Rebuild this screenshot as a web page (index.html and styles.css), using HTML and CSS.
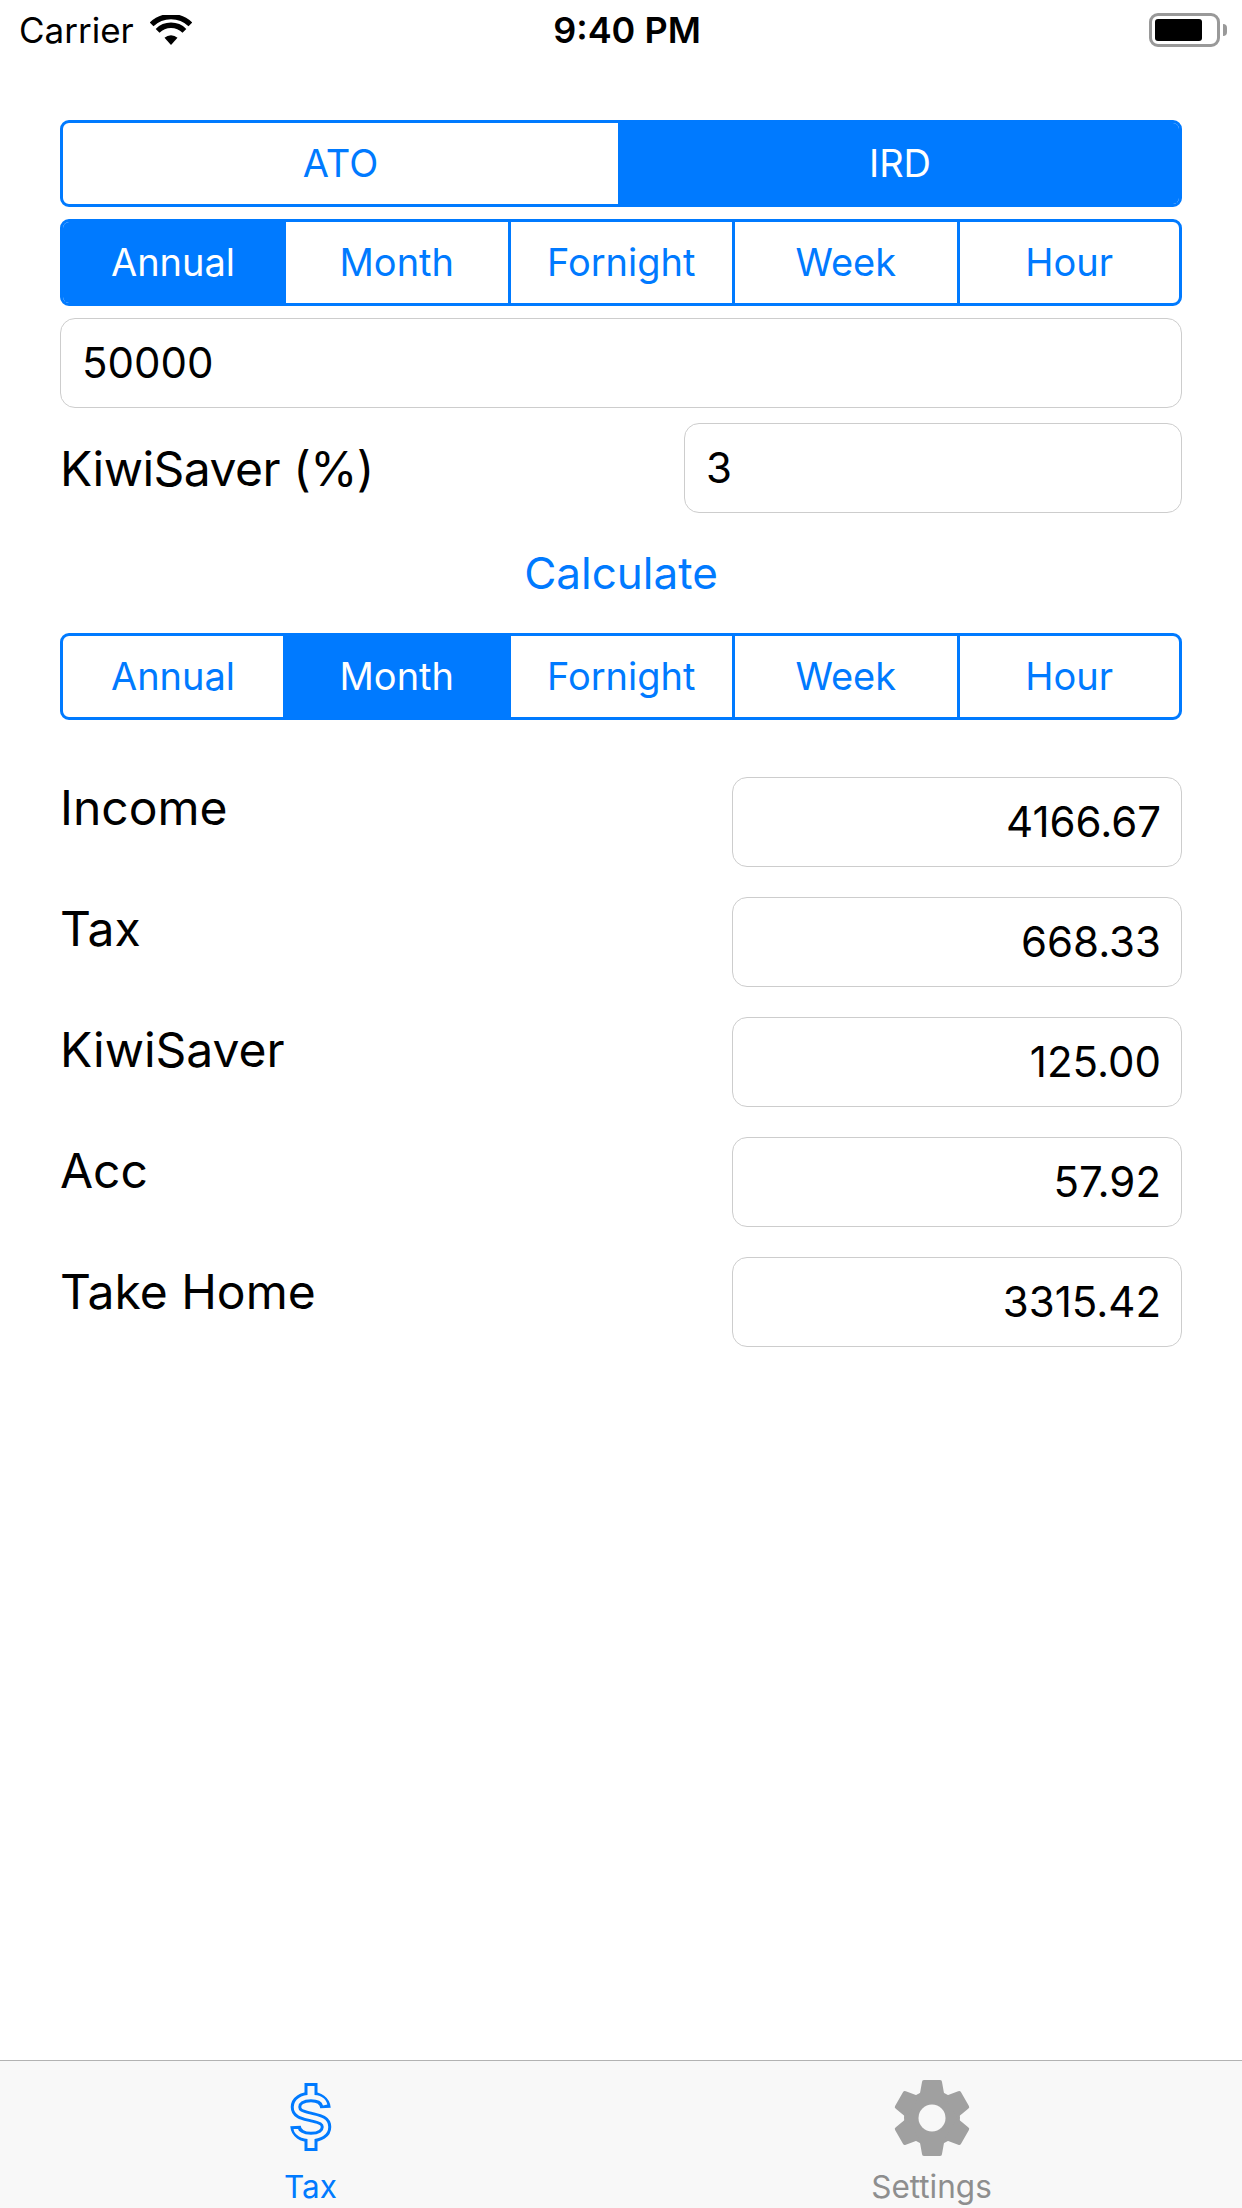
FILE: index.html
```html
<!DOCTYPE html>
<html lang="en">
<head>
    <meta charset="UTF-8">
    <meta name="viewport" content="width=device-width, initial-scale=1.0">
    <title>Tax</title>
    <link rel="stylesheet" href="styles.css">
</head>
<body>
    <div class="status-bar">
        <div class="status-left">
            <span class="carrier">Carrier</span>
            <svg class="wifi" width="42" height="30" viewBox="0 0 42 30">
                <path d="M21 30 L14.5 22.8 A9.6 9.6 0 0 1 27.5 22.8 Z" fill="#000"/>
                <path d="M7.6 15.8 A19 19 0 0 1 34.4 15.8" fill="none" stroke="#000" stroke-width="5.4"/>
                <path d="M1.6 9.4 A28 28 0 0 1 40.4 9.4" fill="none" stroke="#000" stroke-width="5.4"/>
            </svg>
        </div>
        <span class="clock">9:40 PM</span>
        <div class="status-right">
            <div class="battery"><div class="battery-level"></div></div>
            <div class="battery-cap"></div>
        </div>
    </div>

    <main class="content">
        <div class="segments seg-top">
            <div class="seg">ATO</div>
            <div class="seg active">IRD</div>
        </div>
        <div class="segments seg-period">
            <div class="seg active">Annual</div>
            <div class="seg">Month</div>
            <div class="seg">Fornight</div>
            <div class="seg">Week</div>
            <div class="seg">Hour</div>
        </div>
        <div class="field salary">50000</div>
        <div class="kiwi-row">
            <span class="row-label">KiwiSaver (%)</span>
            <div class="field kiwi-field">3</div>
        </div>
        <div class="calculate">Calculate</div>
        <div class="segments seg-result">
            <div class="seg">Annual</div>
            <div class="seg active">Month</div>
            <div class="seg">Fornight</div>
            <div class="seg">Week</div>
            <div class="seg">Hour</div>
        </div>
        <div class="results">
            <div class="result-labels">
                <span class="row-label">Income</span>
                <span class="row-label">Tax</span>
                <span class="row-label">KiwiSaver</span>
                <span class="row-label">Acc</span>
                <span class="row-label">Take Home</span>
            </div>
            <div class="result-values">
                <div class="field result-field">4166.67</div>
                <div class="field result-field">668.33</div>
                <div class="field result-field">125.00</div>
                <div class="field result-field">57.92</div>
                <div class="field result-field">3315.42</div>
            </div>
        </div>
    </main>

    <nav class="tab-bar">
        <div class="tab active">
            <svg class="tab-icon" width="44" height="78" viewBox="0 0 44 78">
                <g fill="none" stroke="#007aff">
                    <path stroke-width="13" d="M22 4 V18 M22 58 V72"/>
                    <path stroke-width="10.5" d="M36.5 29 C36 22 30 18 22 18 C13 18 7 22 7 28 C7 35 14 36 22 38 C30 40 37 41 37 48 C37 54 31 58 22 58 C13 58 7 54 6.5 47"/>
                </g>
                <g fill="none" stroke="#f8f8f8">
                    <path stroke-width="7" d="M22 7 V19 M22 57 V69"/>
                    <path stroke-width="4.5" d="M36.2 26 C35 21 30 18 22 18 C13 18 7 22 7 28 C7 35 14 36 22 38 C30 40 37 41 37 48 C37 54 31 58 22 58 C13 58 7 54 6.8 50"/>
                </g>
            </svg>
            <span class="tab-label">Tax</span>
        </div>
        <div class="tab">
            <svg class="tab-icon" width="76" height="78" viewBox="-38 -39 76 78">
                <defs>
                    <path id="tooth" d="M-10 -36 Q-10 -38 -8 -38 H8 Q10 -38 10 -36 L12.5 -22 H-12.5 Z"/>
                </defs>
                <g fill="#a0a0a0">
                    <circle r="28"/>
                    <use href="#tooth"/>
                    <use href="#tooth" transform="rotate(60)"/>
                    <use href="#tooth" transform="rotate(120)"/>
                    <use href="#tooth" transform="rotate(180)"/>
                    <use href="#tooth" transform="rotate(240)"/>
                    <use href="#tooth" transform="rotate(300)"/>
                </g>
                <circle r="13.5" fill="#f8f8f8"/>
            </svg>
            <span class="tab-label">Settings</span>
        </div>
    </nav>
</body>
</html>
```

FILE: styles.css
```css
* {
    box-sizing: border-box;
}
body {
    margin: 0;
    width: 1242px;
    height: 2208px;
    display: flex;
    flex-direction: column;
    overflow: hidden;
    background: #fff;
    color: #000;
    font-family: Inter, "Liberation Sans", sans-serif;
}
.status-bar {
    height: 60px;
    display: flex;
    align-items: center;
    justify-content: space-between;
    padding: 0 15px 0 19px;
    font-size: 35px;
    flex-shrink: 0;
}
.status-left {
    width: 320px;
    display: flex;
    align-items: center;
    gap: 16px;
}
.wifi {
    margin-top: 0;
}
.clock {
    font-size: 36px;
    font-weight: 600;
    margin-left: 8px;
}
.status-right {
    width: 320px;
    display: flex;
    align-items: center;
    justify-content: flex-end;
}
.battery {
    width: 71px;
    height: 34px;
    border: 3px solid #999;
    border-radius: 9px;
    padding: 3px;
}
.battery-level {
    width: 47px;
    height: 100%;
    background: #000;
    border-radius: 3px;
}
.battery-cap {
    width: 4px;
    height: 12px;
    margin-left: 3px;
    background: #999;
    border-radius: 0 6px 6px 0;
}
.content {
    flex: 1;
    padding: 60px 60px 0;
}
.segments {
    display: flex;
    height: 87px;
    border: 3px solid #007aff;
    border-radius: 9px;
    overflow: hidden;
    color: #007aff;
    font-size: 38px;
}
.seg {
    flex: 0 0 224.5px;
    display: flex;
    align-items: center;
    justify-content: center;
    padding-bottom: 2px;
    border-left: 3px solid #007aff;
}
.seg:first-child {
    flex-basis: 220px;
    border-left: 0;
}
.seg:last-child {
    flex: 1 1 0;
}
.seg-top .seg:first-child {
    flex-basis: 555px;
}
.seg.active {
    background: #007aff;
    color: #fff;
}
.seg-period {
    margin-top: 12px;
}
.field {
    height: 90px;
    border: 1.5px solid #cdcdcd;
    border-radius: 15px;
    padding: 0 20px 2px 21px;
    display: flex;
    align-items: center;
    font-size: 42px;
}
.salary {
    margin-top: 12px;
}
.kiwi-row {
    margin-top: 15px;
    display: flex;
    align-items: center;
    justify-content: space-between;
}
.row-label {
    font-size: 48px;
}
.kiwi-row .row-label {
    letter-spacing: -0.5px;
}
.kiwi-field {
    width: 498px;
}
.calculate {
    margin-top: 37px;
    text-align: center;
    color: #007aff;
    font-size: 44px;
    line-height: 46px;
}
.seg-result {
    margin-top: 37px;
}
.results {
    margin-top: 57px;
    display: flex;
    justify-content: space-between;
}
.result-labels {
    margin-top: 2px;
    display: flex;
    flex-direction: column;
    gap: 63px;
}
.result-labels .row-label {
    line-height: 58px;
}
.result-values {
    display: flex;
    flex-direction: column;
    gap: 30px;
}
.result-field {
    width: 450px;
    justify-content: flex-end;
}
.tab-bar {
    height: 148px;
    flex-shrink: 0;
    display: flex;
    background: #f8f8f8;
    border-top: 1.5px solid #b2b2b2;
}
.tab {
    flex: 1 1 0;
    display: flex;
    flex-direction: column;
    align-items: center;
    color: #8e8e8e;
    font-size: 31.5px;
    padding-top: 18px;
}
.tab.active {
    color: #007aff;
}
.tab-label {
    line-height: 36px;
    margin-top: 12px;
}
```
